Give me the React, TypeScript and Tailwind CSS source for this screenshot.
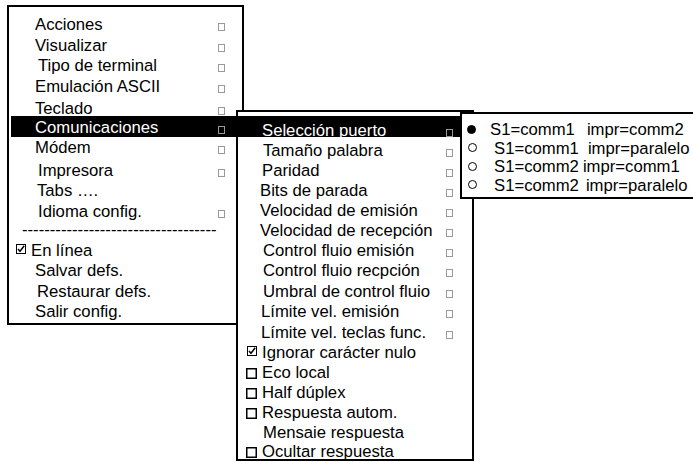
import React from "react"

type Item = {
  label: string
  pad: string
  h?: string
  sq?: boolean
  hl?: boolean
  check?: "on" | "off"
  last?: boolean
  nudge?: string
}

const mainItems: Item[] = [
  { label: "Acciones", pad: "pl-[24px]", sq: true },
  { label: "Visualizar", pad: "pl-[24px]", sq: true },
  { label: "Tipo de terminal", pad: "pl-[27px]", sq: true },
  { label: "Emulación ASCII", pad: "pl-[24px]", sq: true },
  { label: "Teclado", pad: "pl-[24px]", sq: true, nudge: "translate-y-[2px]" },
  { label: "Comunicaciones", pad: "pl-[24px]", sq: true, hl: true },
  { label: "Módem", pad: "pl-[24px]", sq: true },
  { label: "Impresora", pad: "pl-[27px]", sq: true, nudge: "translate-y-[2px]" },
  { label: "Tabs ….", pad: "pl-[26px]", nudge: "translate-y-[2px]" },
  { label: "Idioma config.", pad: "pl-[27px]", sq: true, nudge: "translate-y-[2px]" },
  { label: "-----------------------------------", pad: "pl-[11px]" },
  { label: "En línea", pad: "pl-[5px]", check: "on" },
  { label: "Salvar defs.", pad: "pl-[24px]" },
  { label: "Restaurar defs.", pad: "pl-[26px]" },
  { label: "Salir config.", pad: "pl-[24px]" },
]

const subItems: Item[] = [
  { label: "Selección puerto", pad: "pl-[24px]", sq: true, hl: true },
  { label: "Tamaño palabra", pad: "pl-[25px]", sq: true },
  { label: "Paridad", pad: "pl-[24px]", sq: true },
  { label: "Bits de parada", pad: "pl-[22px]", sq: true },
  { label: "Velocidad de emisión", pad: "pl-[22px]", sq: true },
  { label: "Velocidad de recepción", pad: "pl-[22px]", sq: true },
  { label: "Control fluio emisión", pad: "pl-[25px]", sq: true },
  { label: "Control fluio recpción", pad: "pl-[25px]", sq: true },
  { label: "Umbral de control fluio", pad: "pl-[25px]", sq: true, h: "h-[21px]" },
  { label: "Límite vel. emisión", pad: "pl-[23px]", sq: true },
  { label: "Límite vel. teclas func.", pad: "pl-[23px]", sq: true, h: "h-[21px]" },
  { label: "Ignorar carácter nulo", pad: "pl-[9px]", check: "on" },
  { label: "Eco local", pad: "pl-[8px]", check: "off" },
  { label: "Half dúplex", pad: "pl-[8px]", check: "off" },
  { label: "Respuesta autom.", pad: "pl-[8px]", check: "off" },
  { label: "Mensaie respuesta", pad: "pl-[25px]", h: "h-[19px]" },
  { label: "Ocultar respuesta", pad: "pl-[8px]", check: "off", last: true, h: "h-[17px]" },
]

const ports = [
  { a: "S1=comm1", b: "impr=comm2", on: true, gap: "ml-[12px]" },
  { a: "S1=comm1", b: "impr=paralelo", on: false, gap: "ml-[9px]" },
  { a: "S1=comm2", b: "impr=comm1", on: false, gap: "ml-[4px]" },
  { a: "S1=comm2", b: "impr=paralelo", on: false, gap: "ml-[7px]" },
]

function Square() {
  return <span className="w-[7px] h-[8px] border border-[#9a9a9a] translate-y-[2px] shrink-0" />
}

function CheckOn() {
  return (
    <svg width="10" height="10" viewBox="0 0 10 10" className="shrink-0 -translate-y-[2px] mr-[5px]">
      <rect x="0.5" y="0.5" width="9" height="9" fill="none" stroke="black" strokeWidth="1" />
      <path d="M2 5 L4 7.3 L8.2 1.8" fill="none" stroke="black" strokeWidth="1.5" />
    </svg>
  )
}

function CheckOff() {
  return (
    <svg width="11" height="11" viewBox="0 0 11 11" className="shrink-0 mr-[5px]">
      <rect x="0.75" y="0.75" width="9.5" height="9.5" fill="none" stroke="black" strokeWidth="1.5" />
    </svg>
  )
}

function Row({ it, h, bar, sqRight }: { it: Item; h: string; bar: string; sqRight: string }) {
  return (
    <div className={`relative flex ${it.h ?? h} ${it.last ? "overflow-hidden items-start" : "items-center"}`}>
      {it.hl && <div className={`absolute bg-black ${bar}`} />}
      <div
        className={`relative flex items-center flex-1 ${it.pad} ${it.nudge ?? ""} ${it.hl ? "text-white" : "text-black"} ${it.last ? "h-[20px] shrink-0" : ""}`}
      >
        {it.check === "on" && <CheckOn />}
        {it.check === "off" && <CheckOff />}
        <span className="whitespace-nowrap">{it.label}</span>
        {it.sq && <span className={`ml-auto flex ${sqRight}`}><Square /></span>}
      </div>
    </div>
  )
}

export default function App() {
  return (
    <div className="relative w-[693px] h-[462px] overflow-hidden bg-white text-[16.7px] leading-[20px] text-black font-['Liberation_Sans',Arial,sans-serif]">
      <div className="ml-[7px] mt-[5px] w-[237px] border-2 border-black pt-[8px] px-[2px]">
        {mainItems.map((it) => (
          <Row key={it.label} it={it} h="h-[20.5px]" bar="left-0 right-0 -top-[1.5px] bottom-[1px]" sqRight="mr-[15px]" />
        ))}
      </div>

      <div className="absolute left-[236px] top-[110px] w-[238px] h-[351px] border-2 border-black bg-white pt-[9px]">
        {subItems.map((it) => (
          <Row key={it.label} it={it} h="h-[20px]" bar="-left-[2px] right-0 -top-[5px] bottom-[4px]" sqRight="mr-[19px]" />
        ))}
      </div>

      <div className="absolute left-[460px] top-[112px] w-[260px] border-2 border-black bg-white pt-[7px] pb-[2px]">
        {ports.map((p, i) => (
          <div key={i} className={`flex items-center h-[18.5px] whitespace-nowrap ${p.on ? "pl-[5px]" : "pl-[6px]"}`}>
            <span
              className={`w-[9px] h-[9px] rounded-full border border-black shrink-0 -translate-y-[1px] ${p.on ? "bg-black" : "bg-white"} ${p.on ? "mr-[14px]" : "mr-[17px]"}`}
            />
            <span>{p.a}</span>
            <span className={p.gap}>{p.b}</span>
          </div>
        ))}
      </div>
    </div>
  )
}
